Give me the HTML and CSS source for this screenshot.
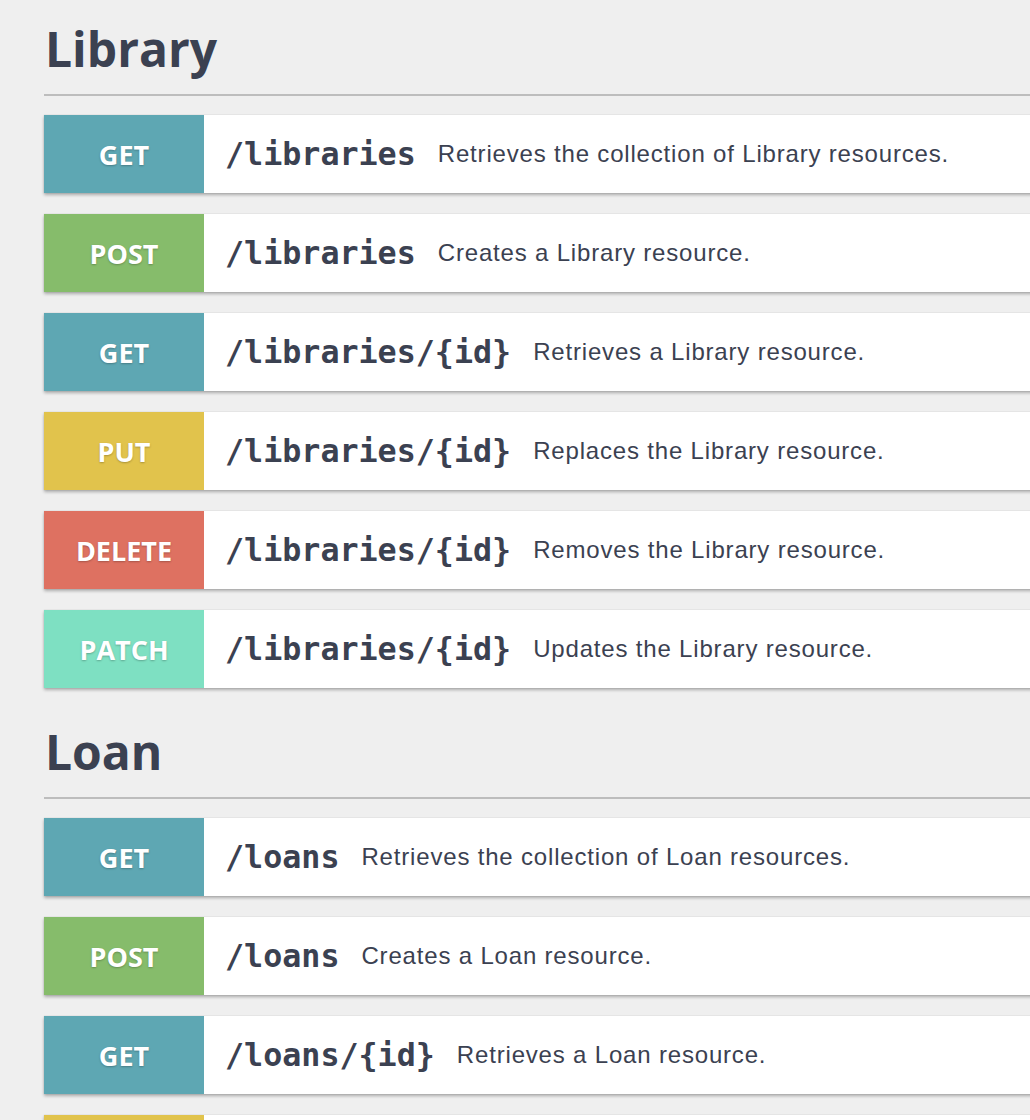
FILE: index.html
```html
<!DOCTYPE html>
<html lang="en">
<head>
<meta charset="utf-8">
<title>API Operations</title>
<link rel="stylesheet" href="styles.css">
</head>
<body>
<main class="doc">
  <section class="tag">
    <h2 class="tag-title">Library</h2>
    <div class="ops">
      <div class="op"><span class="method get">GET</span><span class="path">/libraries</span><span class="desc">Retrieves the collection of Library resources.</span></div>
      <div class="op"><span class="method post">POST</span><span class="path">/libraries</span><span class="desc">Creates a Library resource.</span></div>
      <div class="op"><span class="method get">GET</span><span class="path">/libraries/{id}</span><span class="desc">Retrieves a Library resource.</span></div>
      <div class="op"><span class="method put">PUT</span><span class="path">/libraries/{id}</span><span class="desc">Replaces the Library resource.</span></div>
      <div class="op"><span class="method delete">DELETE</span><span class="path">/libraries/{id}</span><span class="desc">Removes the Library resource.</span></div>
      <div class="op"><span class="method patch">PATCH</span><span class="path">/libraries/{id}</span><span class="desc">Updates the Library resource.</span></div>
    </div>
  </section>
  <section class="tag">
    <h2 class="tag-title">Loan</h2>
    <div class="ops">
      <div class="op"><span class="method get">GET</span><span class="path">/loans</span><span class="desc">Retrieves the collection of Loan resources.</span></div>
      <div class="op"><span class="method post">POST</span><span class="path">/loans</span><span class="desc">Creates a Loan resource.</span></div>
      <div class="op"><span class="method get">GET</span><span class="path">/loans/{id}</span><span class="desc">Retrieves a Loan resource.</span></div>
      <div class="op"><span class="method put">PUT</span><span class="path">/loans/{id}</span><span class="desc">Replaces the Loan resource.</span></div>
    </div>
  </section>
</main>
</body>
</html>
```
FILE: styles.css
```css
html, body {
  margin: 0;
  padding: 0;
  background: #efefef;
  overflow: hidden;
}
body {
  color: #3b4151;
  font-family: "Open Sans", sans-serif;
}
.doc {
  padding-top: 19px;
  margin-left: 44px;
  margin-right: -40px;
}
.tag + .tag {
  margin-top: 34px;
}
.tag-title {
  margin: 0 0 19px;
  padding: 0 0 15px 1px;
  font-family: "Open Sans", sans-serif;
  font-weight: 700;
  font-size: 48px;
  line-height: 60px;
  color: #3b4151;
  border-bottom: 2px solid #bdbdbd;
}
.ops {
  display: flex;
  flex-direction: column;
  gap: 21px;
}
.op {
  display: flex;
  align-items: center;
  height: 78px;
  background: #fff;
  box-shadow: 0 0 1px rgba(0, 0, 0, 0.18), 0 2px 3px rgba(0, 0, 0, 0.28);
}
.method {
  flex: 0 0 160px;
  align-self: stretch;
  display: flex;
  align-items: center;
  justify-content: center;
  color: #fff;
  font-family: "Open Sans", sans-serif;
  font-weight: 700;
  font-size: 27px;
  text-shadow: 0 1px 2px rgba(0, 0, 0, 0.25);
}
.get { background: #5ea7b3; }
.post { background: #86bc6b; }
.put { background: #e1c34c; }
.delete { background: #de7161; }
.patch { background: #7ee0c2; }
.path {
  margin-left: 21px;
  font-family: "DejaVu Sans Mono", monospace;
  font-weight: 700;
  font-size: 31.7px;
  color: #3b4151;
}
.desc {
  margin-left: 22px;
  font-family: "Liberation Sans", Arial, sans-serif;
  font-size: 24px;
  letter-spacing: 0.82px;
  color: #3b4151;
}
```
